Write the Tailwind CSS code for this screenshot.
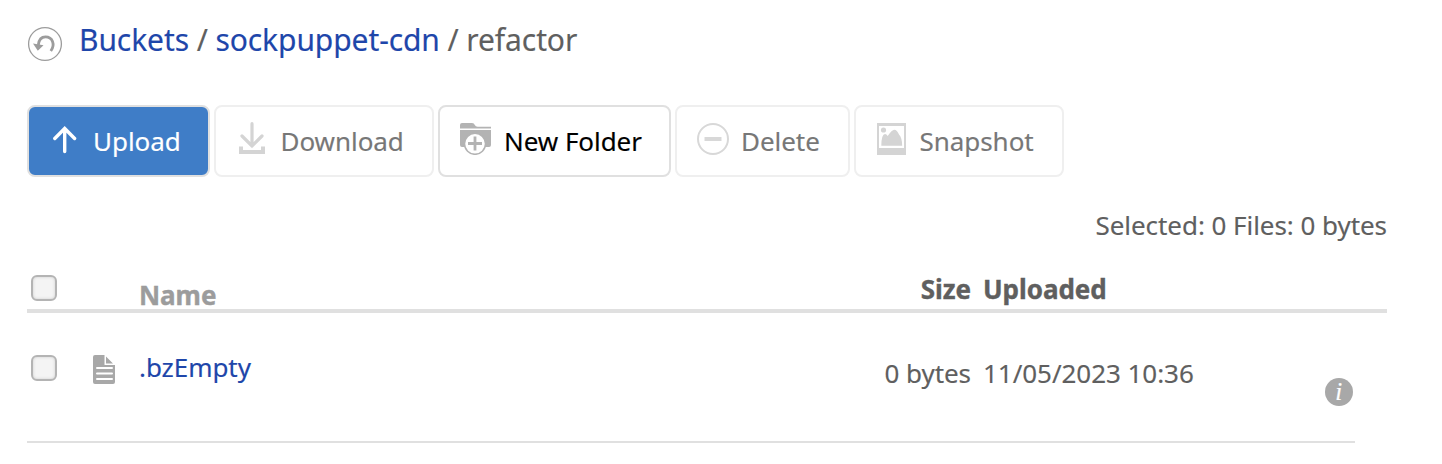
<!DOCTYPE html>
<html lang="en">
<head>
<meta charset="utf-8">
<title>Buckets</title>
<script src="https://cdn.jsdelivr.net/npm/@tailwindcss/browser@4"></script>
</head>
<body class="h-[464px] w-[1442px] overflow-hidden bg-white pl-[27px] font-['Noto_Sans',sans-serif] text-[26px] tracking-[-0.05px] text-[#5f5f5f] [-webkit-text-stroke:0.15px]">
<header class="flex h-[105px] items-start pt-5">
  <svg class="mt-[6px] h-9 w-9 shrink-0" viewBox="0 0 36 36" fill="none" stroke="#9c9c9c"><circle cx="18" cy="18" r="16.4" stroke-width="1.3"/><path d="M11.300 19C12 13 15 10.900 18.500 10.900C25.500 10.900 28.500 18.500 23.800 25" stroke-width="2.800"/><path d="M6 17.500L16.500 19.300L10.800 24.800Z" fill="#9c9c9c" stroke="none"/></svg>
  <nav class="ml-4 whitespace-pre text-[30px] leading-10 tracking-[-0.09px]"><a class="text-[#1e46aa]">Buckets</a> / <a class="text-[#1e46aa]">sockpuppet-cdn</a> / refactor</nav>
</header>
<div class="flex h-[72px] gap-1">
  <button class="flex w-[183px] items-center rounded-lg border-2 border-[#e0e0e0] bg-[#3f7dc7] pl-6 text-white">
    <svg class="mb-1 h-8 w-6 shrink-0" viewBox="0 0 24 32" fill="none" stroke="#fff" stroke-width="3.400" stroke-linecap="round"><path d="M11.700 28.500V6M1.800 15.500L11.700 5.500L21.600 15.500"/></svg>
    <span class="ml-4">Upload</span>
  </button>
  <button class="flex w-[220px] items-center rounded-lg border-2 border-[#efefef] pl-[23px] text-[#777]">
    <svg class="mb-[7px] h-8 w-[26px] shrink-0" viewBox="0 0 26 32" fill="none" stroke="#d4d4d4"><path d="M13 1.700V24M3 14L13 24L23 14" stroke-width="3.200" stroke-linecap="round"/><path d="M2 24.500V30H24V24.500" stroke-width="4"/></svg>
    <span class="ml-[15.500px]">Download</span>
  </button>
  <button class="flex w-[233px] items-center rounded-lg border-2 border-[#e0e0e0] pl-5 text-black">
    <svg class="mb-[5px] h-8 w-8 shrink-0" viewBox="0 0 32 32"><path fill="#b3b3b3" d="M0 5V2Q0 0 2 0H12Q14 0 15 2.300Q15.500 3.700 17.500 3.700H31V5.500H0ZM0 7H31V22Q31 24 29 24H2Q0 24 0 22Z"/><circle cx="15" cy="20.800" r="10.500" fill="#fff" stroke="#b3b3b3" stroke-width="1.500"/><path d="M15 13.500V27.500M8 20.500H22" stroke="#b3b3b3" stroke-width="2.800"/></svg>
    <span class="ml-3">New Folder</span>
  </button>
  <button class="flex w-[175px] items-center rounded-lg border-2 border-[#efefef] pl-5 text-[#777]">
    <svg class="mb-[5px] h-8 w-8 shrink-0" viewBox="0 0 32 32" fill="none" stroke="#d8d8d8"><circle cx="16" cy="16" r="15" stroke-width="2"/><path d="M7.500 16H24.500" stroke-width="4"/></svg>
    <span class="ml-3">Delete</span>
  </button>
  <button class="flex w-[210px] items-center rounded-lg border-2 border-[#efefef] pl-[21px] text-[#777]">
    <svg class="mb-[5px] h-8 w-[29px] shrink-0" viewBox="0 0 29 32" fill="#d4d4d4"><path fill-rule="evenodd" d="M0 0H29V32H0ZM2 3V25H27V3Z"/><circle cx="6.500" cy="7" r="2.600"/><path d="M4.300 22.700Q4.500 10.900 8 10.900Q9.500 10.900 10.700 13Q15 6.700 17.300 6.700Q20 6.700 22 11.500Q25 14.500 25.200 22.700Z"/></svg>
    <span class="ml-[13.500px]">Snapshot</span>
  </button>
</div>
<div class="flex h-[98px] w-[1360px] justify-end pt-[30px] leading-9">Selected: 0 Files: 0 bytes</div>
<main class="-mt-[5px] w-[1360px]">
  <div class="flex h-[43px] items-start border-b-4 border-[#e0e0e0]">
    <span class="ml-[4px] mt-[5px] h-[26px] w-[26px] rounded-[6px] border-2 border-[#b4b4b4] bg-[#f4f4f4] shadow-[inset_0_0_3px_#ccc]"></span>
    <b class="ml-[82px] mt-[7px] w-[640px] leading-9 text-[#9c9c9c] [-webkit-text-stroke:0.4px]">Name</b>
    <b class="mt-px w-[192px] text-right leading-9 [-webkit-text-stroke:0.4px]">Size</b>
    <b class="ml-3 mt-px leading-9 [-webkit-text-stroke:0.4px]">Uploaded</b>
  </div>
  <div class="flex h-[130px] w-[1328px] items-start border-b-2 border-[#e0e0e0]">
    <span class="ml-[4px] mt-[42px] h-[26px] w-[26px] rounded-[6px] border-2 border-[#b4b4b4] bg-[#f4f4f4] shadow-[inset_0_0_3px_#ccc]"></span>
    <svg class="ml-9 mt-[42px] h-[29px] w-[22px] shrink-0" viewBox="0 0 22 29"><path fill="#a8a8a8" d="M2 0H11.500V10H22V27Q22 29 20 29H2Q0 29 0 27V2Q0 0 2 0ZM13 1.500V8.500H20Z"/><path d="M4 13H19M4 18.500H19M4 24H19" stroke="#fff" stroke-width="2" stroke-linecap="round"/></svg>
    <a class="ml-6 mt-[36px] w-[640px] leading-9 text-[#1e46aa]">.bzEmpty</a>
    <span class="mt-[42px] w-[192px] text-right leading-9">0 bytes</span>
    <span class="ml-3 mt-[42px] w-[342px] leading-9">11/05/2023 10:36</span>
    <svg class="mt-[65px] h-7 w-7 shrink-0" viewBox="0 0 28 28"><circle cx="14" cy="14" r="14" fill="#a8a8a8"/><text x="13.800" y="22" text-anchor="middle" font-family="Liberation Serif, serif" font-style="italic" font-size="25" fill="#fff" stroke="#fff" stroke-width=".2">i</text></svg>
  </div>
</main>
</body>
</html>
